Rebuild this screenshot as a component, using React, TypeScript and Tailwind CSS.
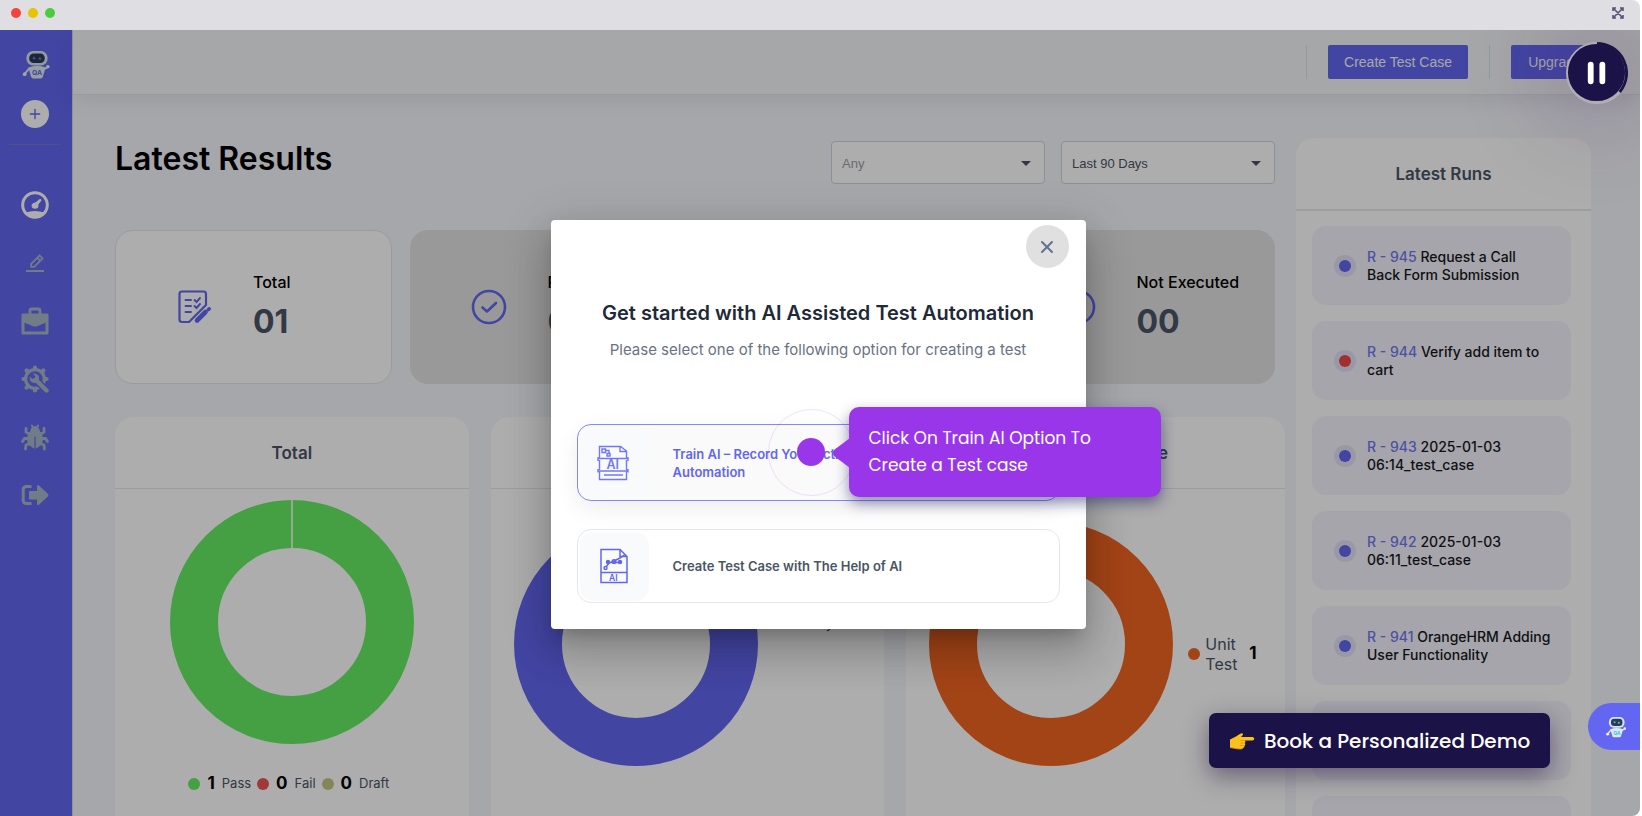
import type { ReactNode } from "react";
import { Plus, X } from "lucide-react";

type Run = { id: string; name: string; dot: string };

const runs: Run[] = [
  { id: "R - 945", name: "Request a Call Back Form Submission", dot: "bg-[#6366f1]" },
  { id: "R - 944", name: "Verify add item to cart", dot: "bg-[#ef4444]" },
  { id: "R - 943", name: "2025-01-03 06:14_test_case", dot: "bg-[#6366f1]" },
  { id: "R - 942", name: "2025-01-03 06:11_test_case", dot: "bg-[#6366f1]" },
  { id: "R - 941", name: "OrangeHRM Adding User Functionality", dot: "bg-[#6366f1]" },
  { id: "", name: "", dot: "" },
  { id: "", name: "", dot: "" },
];

const navButton = "flex h-[58px] w-full items-center justify-center";

function Robot({ className, accent }: { className: string; accent: string }) {
  return (
    <svg viewBox="0 0 28 30" className={className} aria-hidden>
      <rect x="4" y="1" width="22" height="15" rx="7" fill="#d5e5f0" />
      <rect x="7" y="3.5" width="16" height="10" rx="4.5" fill="#2d3a50" />
      <circle cx="12" cy="8.5" r="1.4" fill={accent} />
      <circle cx="18" cy="9" r="1.4" fill={accent} />
      <path d="M6 18 Q15 14.5 24 18 L21 28 Q20.500 29.500 19 29.500 H11 Q9.500 29.500 9 28Z" fill="#dfe9f2" />
      <path d="M7 19 L2.500 24.500 M23 19.500 L26.500 17.500" stroke="#dfe9f2" strokeWidth="2" />
      <circle cx="2.300" cy="25" r="2" fill="#eef3f8" />
      <circle cx="26.300" cy="17.200" r="1.800" fill="#eef3f8" />
      <text x="10" y="26" fontSize="7" fontWeight="700" fontFamily="Inter, sans-serif" fill={accent}>
        QA
      </text>
    </svg>
  );
}

function GaugeIcon() {
  return (
    <svg viewBox="0 0 28 28" className="size-7" fill="#fff" aria-hidden>
      <circle cx="14" cy="14" r="12.300" fill="none" stroke="#fff" strokeWidth="3" />
      <path d="M4.500 21.500 Q14 18.500 23.500 21.500 Q19.500 27 14 27 Q8.500 27 4.500 21.500Z" />
      <path d="M18.600 8 Q20.800 7.600 20.400 9.600 L17.400 13.400 Q18 17.800 14 17.800 Q10.300 17.600 10.600 13.800 Q11.800 11.200 14.800 11.200Z" />
    </svg>
  );
}

function PencilIcon() {
  return (
    <svg viewBox="0 0 18 18" className="size-[18px]" fill="none" stroke="#a6b8c8" strokeWidth="1.800" aria-hidden>
      <path d="M5.200 9.800 L13.600 1.400 L16.600 4.400 L8.200 12.800 H5.200Z M11.400 3.800 L14.200 6.600" />
      <path d="M0 17 H18" strokeWidth="2" />
    </svg>
  );
}

function BriefcaseIcon() {
  return (
    <svg viewBox="0 0 28 28" className="size-7" aria-hidden>
      <path d="M9 7 V3.500 Q9 2 10.500 2 H17.500 Q19 2 19 3.500 V7" fill="none" stroke="#a6b8c8" strokeWidth="2.800" />
      <path d="M2 6.500 H26 Q27.500 6.500 27.500 8 V14.500 L16 19.200 Q14 20 12 19.200 L0.500 14.500 V8 Q0.500 6.500 2 6.500Z" fill="#a6b8c8" />
      <path d="M2 14 V26 H26 V14" fill="none" stroke="#a6b8c8" strokeWidth="3" strokeLinejoin="round" />
    </svg>
  );
}

function GearWrenchIcon() {
  return (
    <svg viewBox="0 0 28 28" className="size-7" fill="none" stroke="#a6b8c8" aria-hidden>
      <circle cx="14" cy="14" r="9.400" strokeWidth="3.200" />
      <g strokeWidth="4.200" strokeLinecap="round">
        <path d="M14 4 V2.500 M14 24 V25.500 M4 14 H2.500 M24 14 H25.500" />
        <path d="M6.900 6.900 L5.600 5.600 M21.100 6.900 L22.400 5.600 M6.900 21.100 L5.600 22.400" />
      </g>
      <path d="M15 15 L25.500 25.500" stroke="#6366f1" strokeWidth="7" />
      <path d="M15 15 L25.500 25.500" strokeWidth="4.400" strokeLinecap="round" />
      <path d="M11.800 8.600 L14.200 11 Q14.400 13.600 11.200 13.900 L8.900 11.600 Q8 15.500 11 17.300 Q14 18.800 17 16.400 Q19.200 13 17 10.200 Q15 8 11.800 8.600Z" fill="#a6b8c8" stroke="none" />
    </svg>
  );
}

function BugIcon() {
  return (
    <svg viewBox="0 0 28 28" className="size-7" fill="none" stroke="#a6b8c8" strokeWidth="2.800" strokeLinecap="round" aria-hidden>
      <path d="M14 7 Q6 8 6 16 Q6 22.500 14 26 Q22 22.500 22 16 Q22 8 14 7Z" fill="#a6b8c8" stroke="none" />
      <path d="M9 9.500 Q9.500 3 14 3 Q18.500 3 19 9.500Z" fill="#a6b8c8" stroke="none" />
      <path d="M12 5 L11 2.500 M16 5 L17 2.500" strokeWidth="2" />
      <path d="M9 11.500 L5 9 V5.500 M19 11.500 L23 9 V5.500" />
      <path d="M8 15.500 H3.500 L1.500 18.500 M20 15.500 H24.500 L26.500 18.500" />
      <path d="M9 20.500 L5 22 L4.500 26 M19 20.500 L23 22 L23.500 26" />
      <path d="M14 14 V25.500" stroke="#6366f1" strokeWidth="1.200" />
    </svg>
  );
}

function SignOutIcon() {
  return (
    <svg viewBox="0 0 28 28" className="size-7" aria-hidden>
      <path d="M10.500 5.500 H5.500 Q2.200 5.500 2.200 8.800 V19.200 Q2.200 22.500 5.500 22.500 H10.500" fill="none" stroke="#a6b8c8" strokeWidth="3" />
      <path d="M9 10 Q8 10 8 11 V17.500 Q8 18.500 9 18.500 H16 V23 Q16.500 24.500 18 23.700 L27 15.200 Q28 14 27 13 L18 4.400 Q16.500 3.500 16 5 V10Z" fill="#a6b8c8" />
    </svg>
  );
}

function ChecklistIcon() {
  return (
    <svg viewBox="0 0 34 34" className="size-[34px]" fill="none" stroke="#6366f1" strokeWidth="2.200" strokeLinecap="round" aria-hidden>
      <path d="M28 14 V4 Q28 1.500 25.500 1.500 H4 Q1.500 1.500 1.500 4 V29.500 Q1.500 32 4 32 H11 L28 15Z" strokeLinejoin="round" />
      <path d="M7.500 10 H13 M7.500 16 H13 M7.500 22 H13 M16.500 10 L18.500 12 L22 8 M16.500 16 L18.500 18 L22 14" strokeWidth="1.900" />
      <path d="M19 30.500 L27.500 22" strokeWidth="4.600" />
      <path d="M30.400 19.600 L31.200 18.800" strokeWidth="3.600" />
    </svg>
  );
}

function CheckIcon() {
  return (
    <svg viewBox="0 0 36 36" className="size-9" fill="none" stroke="#6366f1" strokeWidth="2.600" strokeLinecap="round" strokeLinejoin="round" aria-hidden>
      <circle cx="18" cy="18" r="16" />
      <path d="M11.500 18.500 L16 22.500 L25 14" />
    </svg>
  );
}

function TrainIcon() {
  return (
    <svg viewBox="0 0 32 36" className="h-9 w-8" fill="none" stroke="#7477f5" strokeWidth="1.400" aria-hidden>
      <path d="M2.500 13 V1.500 H23.500 L29.500 6 V13 M23 1.500 V6.500 H29.500 M2.500 26 V34.500 H29.500 V26 M7 30 H26" />
      <path d="M1 13.500 H31 M1 26 H31 M1 12 V16 M31 12 V16 M1 24 V27.500 M31 24 V27.500 M2.500 15 V25 M29.500 15 V25" />
      <path d="M5 4 H8.500 V7.500 H5Z M8.500 5.500 H12 V8 M10 8.500 H13 V11 H10Z" />
      <text x="9.500" y="24" fontSize="12.500" fontFamily="Inter, sans-serif" fill="#7477f5" stroke="none">
        AI
      </text>
    </svg>
  );
}

function GenerateIcon() {
  return (
    <svg viewBox="0 0 32 36" className="h-9 w-8" fill="none" stroke="#6366f1" strokeWidth="1.500" aria-hidden>
      <path d="M3 1.500 H22 L29 8.500 V34.500 H3Z M22 1.500 V8.500 H29 M3 24.500 H29" />
      <path d="M8 19 L11 15 L16 13 L22 10 L27 6.500 M11 14.500 L21 14.500" />
      <circle cx="7.500" cy="20" r="1.500" />
      <circle cx="16" cy="13.500" r="1.800" />
      <circle cx="10" cy="14" r="1.500" fill="#6366f1" />
      <circle cx="22" cy="14" r="1.500" fill="#6366f1" />
      <text x="11" y="32.800" fontSize="8.500" fontWeight="600" fontFamily="Inter, sans-serif" fill="#6366f1" stroke="none">
        AI
      </text>
    </svg>
  );
}

function ExpandIcon() {
  return (
    <svg viewBox="0 0 12 12" className="size-3" fill="none" stroke="#5a5279" strokeWidth="1.600" aria-hidden>
      <path d="M1 4 V1 H4 M8 1 H11 V4 M11 8 V11 H8 M4 11 H1 V8 M1.500 1.500 L10.500 10.500 M10.500 1.500 L1.500 10.500" />
    </svg>
  );
}

function PointingHand() {
  return (
    <svg viewBox="0 0 26 18" className="h-[18px] w-[26px]" aria-hidden>
      <path d="M1 7.500 L7 4.500 Q11 1.500 13 1.300 Q14.500 1.500 13.800 3 L12 5 H23.500 Q25.500 5.500 25.300 7 Q25 8.300 23.500 8.500 H16 Q17 9.500 16 11 Q17 12.500 15.500 13.500 Q15.800 15.500 14 16 Q13 17.500 8.500 16.800 L1 15.500Z" fill="#fcc21b" />
      <path d="M16 8.500 H11.500 M16 11 H11.500 M15.500 13.500 H11 M1 15.500 L8.500 16.800 Q13 17.500 14 16" fill="none" stroke="#e59a12" strokeWidth="0.900" />
    </svg>
  );
}

function Donut({ color, split }: { color: string; split?: boolean }) {
  return (
    <svg viewBox="0 0 246 246" className="size-[246px] shrink-0" aria-hidden>
      <circle cx="123" cy="123" r="98" fill="none" stroke={color} strokeWidth="48" />
      {split && <path d="M123 0.500 V49.500" stroke="#fff" strokeWidth="1.500" />}
    </svg>
  );
}

function Stat({ label, value, active, icon }: { label: string; value: string; active?: boolean; icon: ReactNode }) {
  return (
    <div
      className={`flex h-[154px] items-center rounded-[18px] border ${
        active ? "border-[#e3e4ea] bg-white" : "border-[#e2e2e2] bg-[#e2e2e2]"
      }`}
    >
      <div className="flex w-[137px] justify-center pl-5">{icon}</div>
      <div className="pb-[2px]">
        <p className="text-[16px] leading-6 font-medium text-black">{label}</p>
        <p className="mt-2 text-[32px] leading-10 font-bold text-gray-600">{value}</p>
      </div>
    </div>
  );
}

function ChartCard({ title, children }: { title: string; children: ReactNode }) {
  return (
    <section className="rounded-t-[18px] bg-white">
      <h2 className="flex h-[72px] items-center justify-center border-b border-gray-200 pt-[2px] text-[17px] font-semibold text-gray-600">
        {title}
      </h2>
      {children}
    </section>
  );
}

function LegendItem({ dot, value, label }: { dot: string; value: string; label: string }) {
  return (
    <span className="flex items-center">
      <span className={`size-3 rounded-full ${dot}`} />
      <b className="mx-[7px] text-[17px] font-bold text-black">{value}</b>
      <span className="text-[13px] text-gray-600">{label}</span>
    </span>
  );
}

function Sidebar() {
  return (
    <nav className="w-[73px] shrink-0 border-r border-[#d5d6e8] bg-[#6366f1]">
      <div className="flex w-[69px] flex-col items-center">
        <Robot className="mt-5 ml-[3px] h-[29px] w-[28px]" accent="#6366f1" />
        <button aria-label="Create" className="mt-[21px] flex size-[28px] items-center justify-center rounded-full bg-white">
          <Plus className="size-4 text-[#6366f1]" strokeWidth={2} />
        </button>
        <div className="mt-4 h-px w-[52px] bg-[#7577c9]" />
        <div className="mt-[31px] w-full">
          <button aria-label="Dashboard" className={navButton}><GaugeIcon /></button>
          <button aria-label="Tests" className={navButton}><PencilIcon /></button>
          <button aria-label="Projects" className={navButton}><BriefcaseIcon /></button>
          <button aria-label="Settings" className={navButton}><GearWrenchIcon /></button>
          <button aria-label="Defects" className={navButton}><BugIcon /></button>
          <button aria-label="Sign out" className={navButton}><SignOutIcon /></button>
        </div>
      </div>
    </nav>
  );
}

function Filter({ label, option, muted }: { label: string; option: string; muted?: boolean }) {
  return (
    <label className="relative block">
      <select
        aria-label={label}
        className={`h-[43px] w-[214px] appearance-none rounded border border-[#cbd5e1] bg-white px-[10px] pt-[2px] font-['Liberation_Sans',sans-serif] text-[13px] ${
          muted ? "text-[#9a9ca3]" : "text-gray-600"
        }`}
      >
        <option>{option}</option>
      </select>
      <span className="pointer-events-none absolute top-5 right-[14px] border-x-[5px] border-t-[5px] border-x-transparent border-t-gray-600" />
    </label>
  );
}

function Dashboard() {
  return (
    <div className="flex min-w-0 flex-1 flex-col">
      <header className="relative flex h-[65px] shrink-0 items-center justify-end gap-[21px] border-b border-[#e3e4ea] bg-[#f5f6fa] pr-[41px] font-['Liberation_Sans',sans-serif] text-[14px] shadow-[0_6px_20px_rgba(0,0,0,0.08)]">
        <div className="h-[34px] w-px bg-[#dfe0e4]" />
        <button className="h-[34px] w-[140px] rounded-xs bg-[#6366f1] text-[#f4f6fa]">Create Test Case</button>
        <div className="h-[34px] w-px bg-[#dfe0e4]" />
        <button className="h-[34px] w-[88px] rounded-xs bg-[#6366f1] text-[#f4f6fa]">Upgrade</button>
      </header>

      <div className="flex min-h-0 flex-1 gap-[11px] pr-[49px] pl-[42px]">
        <main className="flex min-w-0 flex-1 flex-col pt-[46px]">
          <div className="flex justify-between pr-[10px]">
            <h1 className="text-[32px] leading-9 font-semibold text-black">Latest Results</h1>
            <div className="flex gap-4">
              <Filter label="Project" option="Any" muted />
              <Filter label="Period" option="Last 90 Days" />
            </div>
          </div>

          <div className="mt-[46px] grid grid-cols-4 gap-[18px] pr-[10px]">
            <Stat label="Total" value="01" active icon={<ChecklistIcon />} />
            <Stat label="Passed" value="01" icon={<CheckIcon />} />
            <Stat label="Failed" value="00" icon={<CheckIcon />} />
            <Stat label="Not Executed" value="00" icon={<CheckIcon />} />
          </div>

          <div className="mt-[33px] grid flex-1 grid-cols-[354fr_394fr_379fr] gap-[22px]">
            <ChartCard title="Total">
              <div className="mt-[10px] flex justify-center">
                <Donut color="#66ec65" split />
              </div>
              <div className="mt-[26px] flex justify-center gap-[6px] pr-[6px]">
                <LegendItem dot="bg-[#66ec65]" value="1" label="Pass" />
                <LegendItem dot="bg-[#ef5454]" value="0" label="Fail" />
                <LegendItem dot="bg-[#c4c486]" value="0" label="Draft" />
              </div>
            </ChartCard>
            <ChartCard title="Test Priority">
              <div className="mt-8 flex pl-[22px]">
                <Donut color="#6366f1" />
                <span className="mt-[91px] pl-[14px] text-[15px] text-gray-600">Usability</span>
              </div>
            </ChartCard>
            <ChartCard title="Test Plan by Type">
              <div className="mt-8 flex pl-[22px]">
                <Donut color="#f06522" />
                <div className="mt-5 ml-[14px] flex items-center">
                  <span className="size-3 shrink-0 rounded-full bg-[#f06522]" />
                  <span className="ml-[5px] w-[44px] text-[16px] leading-5 text-gray-600">Unit Test</span>
                  <b className="text-[17px] text-black">1</b>
                </div>
              </div>
            </ChartCard>
          </div>
        </main>

        <aside className="mt-[43px] flex w-[295px] shrink-0 flex-col rounded-t-[18px] bg-white">
          <h2 className="flex h-[73px] shrink-0 items-center justify-center border-b-2 border-gray-200 pt-[2px] text-[17px] font-semibold text-gray-600">
            Latest Runs
          </h2>
          <ul className="flex flex-col gap-4 pt-[15px] pr-5 pl-4">
            {runs.map((run, i) => (
              <li key={i} className="flex h-[79px] shrink-0 items-center rounded-[14px] bg-[#f3f4fc] pr-5 pl-[22px]">
                {run.id && (
                  <>
                    <span className="flex size-[22px] shrink-0 items-center justify-center rounded-full bg-[#e2e1f6]">
                      <span className={`size-3 rounded-full ${run.dot}`} />
                    </span>
                    <p className="ml-[11px] text-[14px] leading-[18px] font-medium text-[#18181b]">
                      <span className="text-[#7476f2]">{run.id}</span> {run.name}
                    </p>
                  </>
                )}
              </li>
            ))}
          </ul>
        </aside>
      </div>
    </div>
  );
}

function Walkthrough() {
  return (
    <>
      <div className="absolute top-[-15px] left-[191px] size-[87px] rounded-full border border-[#9a36ea]/15" />
      <div className="absolute top-[14px] left-[220px] size-7 rounded-full bg-[#9a36ea]" />
      <div className="absolute top-[-17px] left-[272px] w-[312px] rounded-[10px] bg-[#9a36ea] px-5 py-[18px] text-left font-[Poppins,Inter,sans-serif] text-[17px] leading-[27px] text-white shadow-[0_6px_14px_rgba(30,25,100,0.5)]">
        <svg viewBox="0 0 18 30" className="absolute top-[31px] left-[-17px] h-[30px] w-[18px]" fill="#9a36ea" aria-hidden>
          <path d="M18 0 L2 12 Q0 15 2 18 L18 30Z" />
        </svg>
        Click On Train AI Option To
        <br />
        Create a Test case
      </div>
    </>
  );
}

function StartDialog() {
  return (
    <div
      role="dialog"
      aria-labelledby="start-title"
      className="relative w-[535px] rounded bg-white px-[26px] pt-[79px] pb-[26px] shadow-[0_11px_15px_-7px_rgba(0,0,0,0.2),0_24px_38px_3px_rgba(0,0,0,0.14),0_9px_46px_8px_rgba(0,0,0,0.12)]"
    >
      <button aria-label="Close" className="absolute top-[5px] right-[17px] flex size-[43px] items-center justify-center rounded-full bg-[#e0e0e0]">
        <X className="size-5 text-slate-500" strokeWidth={2.5} />
      </button>
      <h2 id="start-title" className="text-center text-[20px] leading-7 font-semibold text-gray-800">
        Get started with AI Assisted Test Automation
      </h2>
      <p className="mt-[11px] text-center text-[15px] leading-6 text-gray-500">
        Please select one of the following option for creating a test
      </p>

      <div className="relative mt-[62px]">
        <button className="flex h-[77px] w-full items-center rounded-[14px] border border-[#8587f4] bg-[#fafafa] text-left text-[13px] leading-[18px] font-semibold text-[#6366f1] shadow-[0_8px_24px_rgba(0,0,0,0.07)]">
          <span className="flex h-[71px] w-[71px] items-center justify-center rounded-[14px] bg-slate-50">
            <TrainIcon />
          </span>
          <span className="ml-6 w-[280px]">Train AI – Record Your Actions for Test Automation</span>
        </button>
        <Walkthrough />
      </div>
      <button className="mt-7 flex h-[74px] w-full items-center rounded-[14px] border border-gray-200 px-[2px] text-left text-[13px] leading-[18px] font-semibold text-gray-600">
        <span className="flex size-[69px] items-center justify-center rounded-[14px] bg-slate-50">
          <GenerateIcon />
        </span>
        <span className="ml-6">Create Test Case with The Help of AI</span>
      </button>
    </div>
  );
}

export default function App() {
  return (
    <div className="flex h-screen bg-white pr-[2px] font-[Inter,sans-serif]">
      <div className="flex flex-1 flex-col overflow-hidden rounded-r-lg">
        <div className="flex h-[30px] shrink-0 items-center gap-[7px] bg-[#dfdee3] pr-4 pb-1 pl-[11px]">
          <span className="size-[10px] rounded-full bg-[#f3453c]" />
          <span className="size-[10px] rounded-full bg-[#e9c300]" />
          <span className="size-[10px] rounded-full bg-[#4ccb40]" />
          <button aria-label="Full screen" className="ml-auto"><ExpandIcon /></button>
        </div>

        <div className="relative flex min-h-0 flex-1 overflow-hidden bg-[#f5f6fd]">
          <Sidebar />
          <Dashboard />

          <div className="absolute inset-0 flex items-center justify-center bg-black/32 pt-[3px] pr-1">
            <StartDialog />
          </div>

          <button aria-label="Pause" className="absolute top-[12px] right-[12px] rounded-full shadow-[0_0_90px_20px_rgba(60,20,80,0.22)]">
            <svg viewBox="0 0 64 64" className="size-[62px]" aria-hidden>
              <circle cx="32" cy="32" r="30.500" fill="none" stroke="#aeaeb3" strokeWidth="3" />
              <circle cx="31.500" cy="31.500" r="29.500" fill="#1b1247" />
              <path d="M32 1.500 A30.500 30.500 0 0 1 55.400 51.600" fill="none" stroke="#1b1247" strokeWidth="3" />
              <path d="M25.500 23.500 V40.500 M37.500 23.500 V40.500" stroke="#fff" strokeWidth="6" strokeLinecap="round" />
            </svg>
          </button>
          <button aria-label="Assistant" className="absolute right-0 bottom-[66px] flex h-[47px] w-[52px] items-center justify-center rounded-l-full bg-[#6366f1] pl-1">
            <Robot className="h-[22px] w-[20px]" accent="#3cc8e8" />
          </button>
          <a
            href="#demo"
            className="absolute right-[90px] bottom-12 flex h-[55px] w-[341px] items-center rounded-[7px] bg-[#1b1247] pl-5 font-[Poppins,Inter,sans-serif] text-[20px] font-medium whitespace-nowrap text-white shadow-[0_8px_24px_rgba(40,20,60,0.5)]"
          >
            <PointingHand />
            <span className="ml-[9px]">Book a Personalized Demo</span>
          </a>
        </div>
      </div>
    </div>
  );
}
